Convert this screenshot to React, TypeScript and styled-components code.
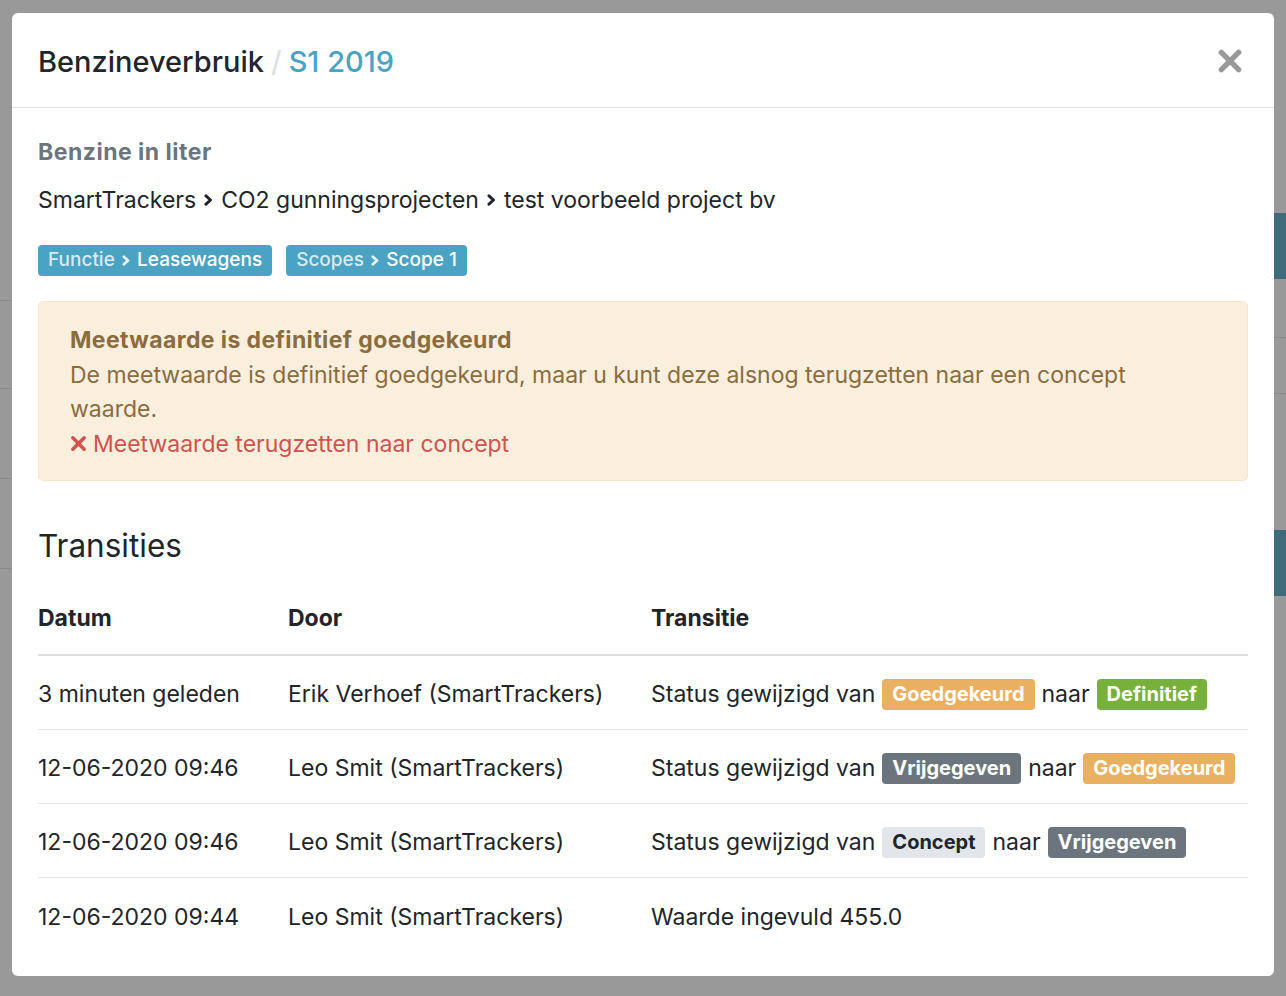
import styled, { createGlobalStyle } from "styled-components";

const GlobalStyle = createGlobalStyle`
  html, body {
    margin: 0;
    padding: 0;
    background: #999999;
  }
  body {
    font-family: Inter, "Noto Sans", "Liberation Sans", sans-serif;
    color: #212529;
  }
  * {
    box-sizing: border-box;
  }
`

const Page = styled.div`
  width: 1286px;
  height: 996px;
  display: grid;
  grid-template-columns: 12px 1262px 12px;
  padding-top: 13px;
  overflow: hidden;
`

const Gutter = styled.div`
  display: flex;
  flex-direction: column;
`

const GutterLine = styled.div<{ $top: number }>`
  margin-top: ${p => p.$top}px;
  height: 1px;
  background: #8a8a8a;
`

const GutterBlock = styled.div<{ $top: number; $height: number }>`
  margin-top: ${p => p.$top}px;
  height: ${p => p.$height}px;
  background: #3f6b7a;
`

const Modal = styled.div`
  background: #ffffff;
  border-radius: 6px;
  height: 963px;
  display: flex;
  flex-direction: column;
`

const Header = styled.div`
  height: 95px;
  padding: 2px 31px 0 26px;
  display: flex;
  align-items: center;
  justify-content: space-between;
  border-bottom: 1px solid #e3e3e3;
`

const Title = styled.h4`
  margin: 0;
  font-size: 29px;
  font-weight: 500;
  color: #212529;
`

const Slash = styled.span`
  color: #dcdfe3;
  margin: 0 7px;
`

const Period = styled.span`
  color: #4ba3c3;
`

const CloseButton = styled.button`
  border: 0;
  background: none;
  padding: 0;
  width: 26px;
  height: 26px;
  display: flex;
  align-items: center;
  justify-content: center;
  cursor: pointer;
`

const Body = styled.div`
  padding: 27px 26px 0;
  display: flex;
  flex-direction: column;
  font-size: 23px;
  line-height: 34.5px;
`

const Subtitle = styled.div`
  font-weight: 700;
  letter-spacing: 0.5px;
  color: #6c757d;
`

const Breadcrumb = styled.div`
  margin-top: 13px;
  display: flex;
  align-items: center;
  gap: 8px;
`

const Tags = styled.div`
  margin-top: 28px;
  display: flex;
  gap: 14px;
`

const Tag = styled.span`
  height: 31px;
  padding: 0 10px;
  border-radius: 4px;
  background: #4ba3c3;
  color: #ffffff;
  font-size: 19px;
  font-weight: 500;
  display: inline-flex;
  align-items: center;
  gap: 7px;
`

const TagKey = styled.span`
  color: rgba(255, 255, 255, 0.78);
`

const Alert = styled.div`
  margin-top: 25px;
  background: #faeedd;
  border: 1px solid #f6e6cc;
  border-radius: 5px;
  padding: 21px 60px 18px 31px;
  color: #8a6d3f;
`

const AlertTitle = styled.div`
  font-weight: 700;
  letter-spacing: 0.4px;
`

const AlertLink = styled.a`
  color: #d0534f;
  text-decoration: none;
  display: inline-flex;
  align-items: center;
  gap: 6px;
`

const SectionTitle = styled.h3`
  margin: 46px 0 0;
  font-size: 31.5px;
  font-weight: 400;
  line-height: 38px;
`

const Table = styled.div`
  margin-top: 18px;
  display: flex;
  flex-direction: column;
`

const Row = styled.div<{ $head?: boolean; $last?: boolean }>`
  display: grid;
  grid-template-columns: 250px 363px 1fr;
  align-items: center;
  height: ${p => (p.$head ? 73 : 74)}px;
  padding-top: ${p => (p.$head ? 0 : 4)}px;
  font-weight: ${p => (p.$head ? 700 : 400)};
  border-bottom: ${p => (p.$last ? "none" : p.$head ? "2px solid #dee2e6" : "1px solid #e5e7ea")};
`

const Cell = styled.div`
  display: flex;
  align-items: center;
  gap: 7px;
  white-space: nowrap;
`

const statusColors: Record<string, [string, string]> = {
  Goedgekeurd: ["#e9b061", "#ffffff"],
  Definitief: ["#78b03c", "#ffffff"],
  Vrijgegeven: ["#6c757d", "#ffffff"],
  Concept: ["#e2e5e9", "#212529"],
}

const Status = styled.span<{ $bg: string; $fg: string }>`
  height: 31px;
  padding: 0 10px;
  border-radius: 4px;
  background: ${p => p.$bg};
  color: ${p => p.$fg};
  font-size: 20px;
  font-weight: 700;
  display: inline-flex;
  align-items: center;
`

function Chevron({ color = "#212529", size = 12 }: { color?: string; size?: number }) {
  return (
    <svg width={size * 0.75} height={size} viewBox="0 0 9 12">
      <path d="M2 1.8 L6.5 6 L2 10.2" fill="none" stroke={color} strokeWidth="3" strokeLinecap="round" strokeLinejoin="round" />
    </svg>
  )
}

function Cross({ color, size, stroke }: { color: string; size: number; stroke: number }) {
  return (
    <svg width={size} height={size} viewBox="0 0 24 24">
      <path d="M4 4 L20 20 M20 4 L4 20" stroke={color} strokeWidth={stroke} strokeLinecap="round" />
    </svg>
  )
}

function Badge({ label }: { label: string }) {
  const [bg, fg] = statusColors[label]
  return <Status $bg={bg} $fg={fg}>{label}</Status>
}

function Change({ from, to }: { from: string; to: string }) {
  return (
    <>
      Status gewijzigd van <Badge label={from} /> naar <Badge label={to} />
    </>
  )
}

const rows = [
  { date: "3 minuten geleden", by: "Erik Verhoef (SmartTrackers)", t: <Change from="Goedgekeurd" to="Definitief" /> },
  { date: "12-06-2020 09:46", by: "Leo Smit (SmartTrackers)", t: <Change from="Vrijgegeven" to="Goedgekeurd" /> },
  { date: "12-06-2020 09:46", by: "Leo Smit (SmartTrackers)", t: <Change from="Concept" to="Vrijgegeven" /> },
  { date: "12-06-2020 09:44", by: "Leo Smit (SmartTrackers)", t: <>Waarde ingevuld 455.0</> },
]

export default function App() {
  return (
    <>
      <GlobalStyle />
      <Page>
        <Gutter>
          <GutterLine $top={287} />
          <GutterLine $top={87} />
          <GutterLine $top={89} />
          <GutterLine $top={89} />
        </Gutter>
        <Modal>
          <Header>
            <Title>
              Benzineverbruik<Slash>/</Slash><Period>S1 2019</Period>
            </Title>
            <CloseButton aria-label="Sluiten">
              <Cross color="#999999" size={26} stroke={5} />
            </CloseButton>
          </Header>
          <Body>
            <Subtitle>Benzine in liter</Subtitle>
            <Breadcrumb>
              SmartTrackers <Chevron /> CO2 gunningsprojecten <Chevron /> test voorbeeld project bv
            </Breadcrumb>
            <Tags>
              <Tag>
                <TagKey>Functie</TagKey>
                <Chevron color="rgba(255,255,255,0.85)" size={11} />
                Leasewagens
              </Tag>
              <Tag>
                <TagKey>Scopes</TagKey>
                <Chevron color="rgba(255,255,255,0.85)" size={11} />
                Scope 1
              </Tag>
            </Tags>
            <Alert>
              <AlertTitle>Meetwaarde is definitief goedgekeurd</AlertTitle>
              <div>
                De meetwaarde is definitief goedgekeurd, maar u kunt deze alsnog terugzetten naar een concept waarde.
              </div>
              <AlertLink href="#">
                <Cross color="#d0534f" size={17} stroke={5} />
                Meetwaarde terugzetten naar concept
              </AlertLink>
            </Alert>
            <SectionTitle>Transities</SectionTitle>
            <Table>
              <Row $head>
                <Cell>Datum</Cell>
                <Cell>Door</Cell>
                <Cell>Transitie</Cell>
              </Row>
              {rows.map((r, i) => (
                <Row key={i} $last={i === rows.length - 1}>
                  <Cell>{r.date}</Cell>
                  <Cell>{r.by}</Cell>
                  <Cell>{r.t}</Cell>
                </Row>
              ))}
            </Table>
          </Body>
        </Modal>
        <Gutter>
          <GutterBlock $top={200} $height={66} />
          <GutterLine $top={58} />
          <GutterLine $top={55} />
          <GutterBlock $top={136} $height={66} />
        </Gutter>
      </Page>
    </>
  )
}
